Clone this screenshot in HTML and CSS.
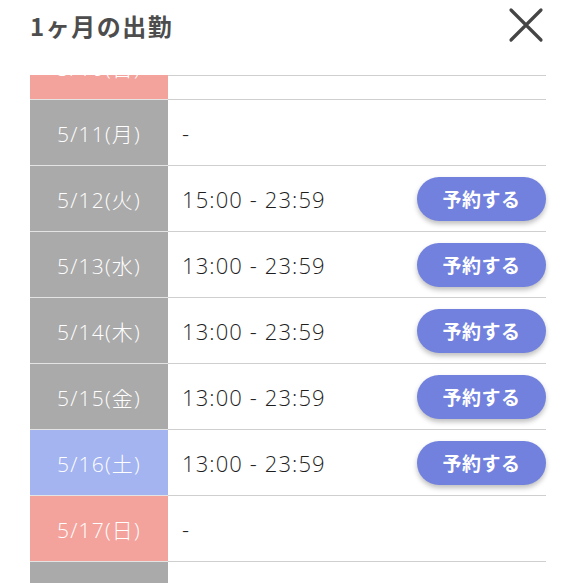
FILE: index.html
```html
<!DOCTYPE html>
<html lang="ja">

<head>
    <meta charset="utf-8">
    <meta name="viewport" content="width=device-width, initial-scale=1.0">
    <title>1ヶ月の出勤</title>
    <link rel="stylesheet" href="styles.css">
</head>

<body>
    <header class="head">
        <h1 class="title">1ヶ月の出勤</h1>
        <button class="close" aria-label="閉じる">
            <svg width="36" height="36" viewBox="0 0 36 36">
                <path d="M3 3 L33 33 M33 3 L3 33" stroke="#454545" stroke-width="3.2" stroke-linecap="round" fill="none" />
            </svg>
        </button>
    </header>

    <div class="schedule">
        <ul class="days">
            <li class="day">
                <span class="date sun">5/10(日)</span>
                <span class="time">-</span>
            </li>
            <li class="day">
                <span class="date">5/11(月)</span>
                <span class="time">-</span>
            </li>
            <li class="day">
                <span class="date">5/12(火)</span>
                <span class="time">15:00 - 23:59</span>
                <button class="reserve">予約する</button>
            </li>
            <li class="day">
                <span class="date">5/13(水)</span>
                <span class="time">13:00 - 23:59</span>
                <button class="reserve">予約する</button>
            </li>
            <li class="day">
                <span class="date">5/14(木)</span>
                <span class="time">13:00 - 23:59</span>
                <button class="reserve">予約する</button>
            </li>
            <li class="day">
                <span class="date">5/15(金)</span>
                <span class="time">13:00 - 23:59</span>
                <button class="reserve">予約する</button>
            </li>
            <li class="day">
                <span class="date sat">5/16(土)</span>
                <span class="time">13:00 - 23:59</span>
                <button class="reserve">予約する</button>
            </li>
            <li class="day">
                <span class="date sun">5/17(日)</span>
                <span class="time">-</span>
            </li>
            <li class="day">
                <span class="date">5/18(月)</span>
                <span class="time">-</span>
            </li>
        </ul>
    </div>
</body>

</html>
```

FILE: styles.css
```css
body {
    margin: 0;
    height: 583px;
    overflow: hidden;
    background: #fff;
    font-family: "Open Sans", "Noto Sans CJK JP", sans-serif;
}

.head {
    height: 75px;
    display: flex;
    justify-content: space-between;
    align-items: flex-start;
    padding: 0 32px 0 30px;
}

.title {
    margin: 8px 0 0;
    font-family: "Noto Sans CJK JP", sans-serif;
    font-size: 24px;
    font-weight: 700;
    color: #4d4d4d;
    letter-spacing: 1.5px;
}

.close {
    margin-top: 7px;
    padding: 0;
    border: none;
    background: none;
    width: 36px;
    height: 36px;
}

.schedule {
    height: 508px;
    overflow: hidden;
    padding: 0 30px;
    position: relative;
}

.schedule::before {
    content: "";
    display: block;
    margin-left: 138px;
    border-top: 1px solid #cfcfcf;
    position: relative;
    z-index: 1;
}

.days {
    list-style: none;
    margin: -42px 0 0;
    padding: 0;
}

.day {
    display: flex;
    align-items: center;
    height: 65px;
    border-bottom: 1px solid #cfcfcf;
}

.date {
    width: 138px;
    height: 100%;
    display: flex;
    align-items: center;
    justify-content: center;
    background: #aaaaaa;
    color: #fff;
    font-size: 21px;
    font-weight: 300;
    letter-spacing: 1.2px;
    box-shadow: 0 1px 0 #e4e4e4;
}

.date.sun {
    background: #f4a29c;
}

.date.sat {
    background: #a3b4f1;
}

.time {
    flex: 1;
    padding-left: 14px;
    font-size: 22px;
    font-weight: 300;
    letter-spacing: 1.1px;
    color: #1e1e1e;
}

.reserve {
    width: 129px;
    height: 44px;
    border: none;
    border-radius: 22px;
    background: #7181dd;
    color: #fff;
    font-family: "Noto Sans CJK JP", sans-serif;
    font-size: 19px;
    font-weight: 700;
    letter-spacing: 0.5px;
    box-shadow: 0 3px 5px rgba(0, 0, 0, 0.25);
}
```
